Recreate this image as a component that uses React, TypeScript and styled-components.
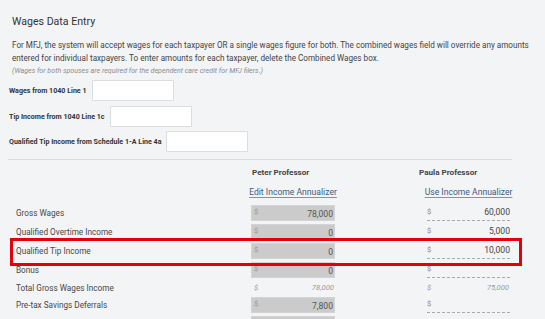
import styled, { createGlobalStyle } from 'styled-components';

const GlobalStyle = createGlobalStyle`
  body {
    margin: 0;
    background: #f3f4f6;
    font-family: Roboto, "Liberation Sans", sans-serif;
    color: #484848;
  }
`

const Page = styled.div`
  width: 545px;
  height: 319px;
  overflow: hidden;
  box-sizing: border-box;
  padding: 14px 33px 0 8px;
`

const Title = styled.h2`
  margin: 0 0 0 4px;
  font-size: 10.6px;
  line-height: 16px;
  font-weight: 400;
  color: #333;
`

const Intro = styled.p`
  margin: 8.5px -26px 0 4px;
  font-size: 8.15px;
  line-height: 13px;
  color: #444;
`

const Note = styled.p`
  margin: 0.5px 0 0 4px;
  font-size: 7.1px;
  line-height: 12px;
  font-style: italic;
  color: #8c8c8c;
`

const Fields = styled.div`
  display: flex;
  flex-direction: column;
  gap: 4.5px;
  margin-top: 3px;
  padding-left: 1px;
`

const FieldRow = styled.label`
  display: flex;
  align-items: center;
  gap: 5px;
  height: 21px;
  font-size: 7.1px;
  font-weight: 700;
  color: #333;
`

const TextBox = styled.input`
  width: 82px;
  height: 21px;
  box-sizing: border-box;
  border: 1px solid #dcdde0;
  border-radius: 1px;
  background: #fff;
  padding: 0 4px;
`

const Divider = styled.hr`
  margin: 7px 0 0 0;
  border: 0;
  border-top: 1px solid #dcdde0;
`

const Grid = styled.div`
  display: grid;
  grid-template-columns: 235px 84px 92px 83px;
  grid-template-areas: "label peter . paula";
  padding-left: 8px;
`

const HeadRow = styled(Grid)`
  margin-top: 6px;
  height: 12px;
  align-items: center;
`

const PersonName = styled.div<{ $area: string; $nudge: number }>`
  grid-area: ${({ $area }) => $area};
  justify-self: start;
  margin-left: ${({ $nudge }) => $nudge}px;
  white-space: nowrap;
  font-size: 8.1px;
  font-weight: 700;
  color: #444;
`

const LinkRow = styled(Grid)`
  margin-top: 8px;
  height: 12px;
  align-items: center;
`

const LinkCell = styled.div<{ $area: string }>`
  grid-area: ${({ $area }) => $area};
  display: flex;
  justify-content: center;
`

const Annualizer = styled.a`
  white-space: nowrap;
  font-size: 8.6px;
  color: #3e5a7c;
  text-decoration: underline;
  text-underline-offset: 2px;
  text-decoration-color: #7d93b0;
`

const Rows = styled.div`
  display: flex;
  flex-direction: column;
  gap: 3px;
  margin-top: 7px;
`

const Row = styled(Grid)<{ $total?: boolean; $highlighted?: boolean }>`
  position: relative;
  height: ${({ $total }) => ($total ? 13 : 16)}px;
  align-items: center;

  ${({ $highlighted }) => $highlighted && `
    &::after {
      content: '';
      position: absolute;
      left: 2px;
      right: -10px;
      top: -5px;
      bottom: -7px;
      border: 3px solid #e3000b;
      z-index: 2;
    }
  `}
`

const RowLabel = styled.div`
  grid-area: label;
  font-size: 8.2px;
  color: #474747;
  white-space: nowrap;
`

const LockedBox = styled.div`
  grid-area: peter;
  display: flex;
  justify-content: space-between;
  height: 16px;
  box-sizing: border-box;
  padding: 1px 1px 0 2px;
  background: #cbcbcb;
  border: 1px solid #d4d4d4;
`

const Dollar = styled.span<{ $italic?: boolean }>`
  align-self: flex-start;
  font-size: 7.6px;
  line-height: 9px;
  color: #999;
  font-style: ${({ $italic }) => ($italic ? 'italic' : 'normal')};
`

const Amount = styled.span`
  align-self: flex-end;
  font-size: 8.6px;
  line-height: 11px;
  color: #555;
`

const EntryBox = styled.div`
  grid-area: paula;
  display: flex;
  justify-content: space-between;
  height: 16px;
  box-sizing: border-box;
  border-bottom: 1px dashed #a9a9a9;
`

const EntryDollar = styled(Dollar)`
  align-self: center;
  margin-top: -3px;
  color: #8a8a8a;
`

const EntryAmount = styled(Amount)`
  align-self: center;
  color: #444;
`

const TotalCell = styled.div<{ $area: string }>`
  grid-area: ${({ $area }) => $area};
  display: flex;
  justify-content: space-between;
  align-items: center;
  padding-left: ${({ $area }) => ($area === 'peter' ? 3 : 0)}px;
  padding-right: 1px;
  font-style: italic;
  color: #9a9a9a;
  font-size: 7.6px;
`

type Line = { label: string; peter?: string; paula?: string; total?: boolean; highlighted?: boolean }

const lines: Line[] = [
  { label: 'Gross Wages', peter: '78,000', paula: '60,000' },
  { label: 'Qualified Overtime Income', peter: '0', paula: '5,000' },
  { label: 'Qualified Tip Income', peter: '0', paula: '10,000', highlighted: true },
  { label: 'Bonus', peter: '0', paula: '' },
  { label: 'Total Gross Wages Income', peter: '78,000', paula: '75,000', total: true },
  { label: 'Pre-tax Savings Deferrals', peter: '7,800', paula: '' },
  { label: '', peter: '', paula: '' },
]

export default function App() {
  return (
    <Page>
      <GlobalStyle />
      <Title>Wages Data Entry</Title>
      <Intro>
        For MFJ, the system will accept wages for each taxpayer OR a single wages figure for both. The combined wages field will override any amounts
        entered for individual taxpayers. To enter amounts for each taxpayer, delete the Combined Wages box.
      </Intro>
      <Note>(Wages for both spouses are required for the dependent care credit for MFJ filers.)</Note>

      <Fields>
        <FieldRow>Wages from 1040 Line 1<TextBox /></FieldRow>
        <FieldRow>Tip Income from 1040 Line 1c<TextBox /></FieldRow>
        <FieldRow>Qualified Tip Income from Schedule 1-A Line 4a<TextBox /></FieldRow>
      </Fields>

      <Divider />

      <HeadRow>
        <PersonName $area="peter" $nudge={1}>Peter Professor</PersonName>
        <PersonName $area="paula" $nudge={-8}>Paula Professor</PersonName>
      </HeadRow>
      <LinkRow>
        <LinkCell $area="peter"><Annualizer>Edit Income Annualizer</Annualizer></LinkCell>
        <LinkCell $area="paula"><Annualizer>Use Income Annualizer</Annualizer></LinkCell>
      </LinkRow>

      <Rows>
        {lines.map((line, i) => (
          <Row key={i} $total={line.total} $highlighted={line.highlighted}>
            <RowLabel>{line.label}</RowLabel>
            {line.total ? (
              <>
                <TotalCell $area="peter"><span>$</span><span>{line.peter}</span></TotalCell>
                <TotalCell $area="paula"><span>$</span><span>{line.paula}</span></TotalCell>
              </>
            ) : (
              <>
                <LockedBox>
                  <Dollar>$</Dollar>
                  <Amount>{line.peter}</Amount>
                </LockedBox>
                <EntryBox>
                  <EntryDollar>$</EntryDollar>
                  <EntryAmount>{line.paula}</EntryAmount>
                </EntryBox>
              </>
            )}
          </Row>
        ))}
      </Rows>
    </Page>
  )
}
